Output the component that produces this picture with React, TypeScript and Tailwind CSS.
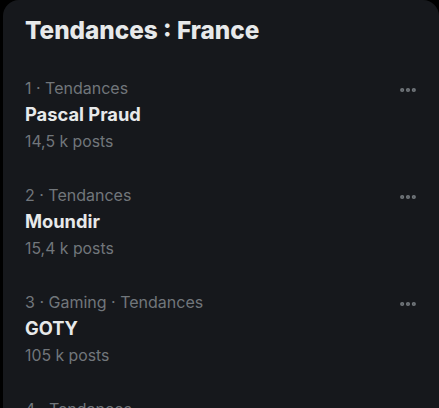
import { MoreHorizontal } from "lucide-react";

type Trend = { meta: string; name: string; posts: string };

const trends: Trend[] = [
  { meta: "1 · Tendances", name: "Pascal Praud", posts: "14,5 k posts" },
  { meta: "2 · Tendances", name: "Moundir", posts: "15,4 k posts" },
  { meta: "3 · Gaming · Tendances", name: "GOTY", posts: "105 k posts" },
  { meta: "4 · Tendances", name: "Noël", posts: "32,1 k posts" },
];

function TrendRow({ trend }: { trend: Trend }) {
  return (
    <div className="flex items-start justify-between pt-[13px] pb-[14px] pl-[22px] pr-[21px]">
      <div>
        <div className="text-[16px] leading-[26px] text-[#71767b]">{trend.meta}</div>
        <div className="text-[18.3px] font-bold leading-[27px] text-[#e7e9ea]">{trend.name}</div>
        <div className="text-[15.8px] leading-[27px] text-[#71767b]">{trend.posts}</div>
      </div>
      <MoreHorizontal className="mt-[5px] h-[20px] w-[20px] text-[#71767b]" strokeWidth={3} />
    </div>
  );
}

export default function App() {
  return (
    <div className="h-[408px] w-full overflow-hidden bg-black pl-[3px] font-['Inter',sans-serif]">
      <div className="h-[460px] rounded-t-2xl bg-[#16181c]">
        <h2 className="px-[22px] pb-[17px] pt-[16px] text-[24.3px] font-extrabold leading-[29px] text-[#e7e9ea]">
          Tendances : France
        </h2>
        {trends.map((t) => (
          <TrendRow key={t.name} trend={t} />
        ))}
      </div>
    </div>
  );
}
